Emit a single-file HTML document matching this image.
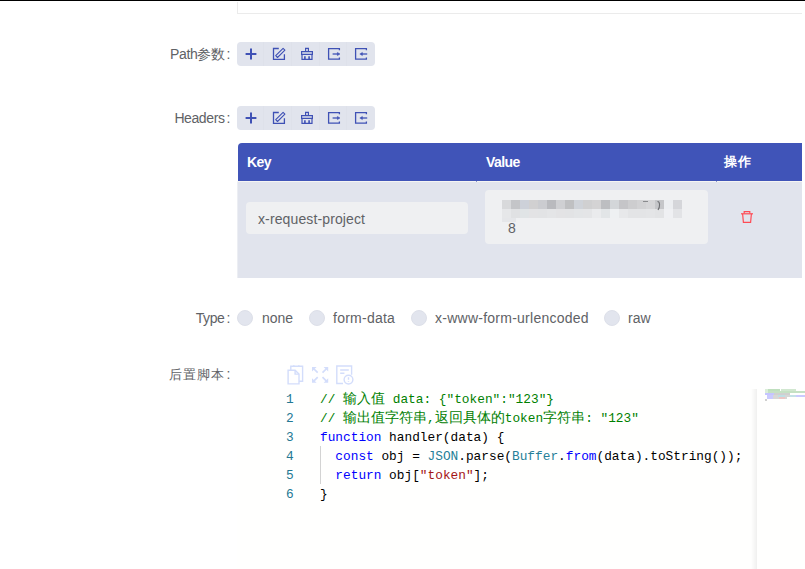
<!DOCTYPE html>
<html><head><meta charset="utf-8">
<style>
*{margin:0;padding:0;box-sizing:border-box}
html,body{width:805px;height:569px;overflow:hidden;background:#fff}
body{position:relative;font-family:"Liberation Sans",sans-serif;color:#606266}
.a{position:absolute}
.lbl{position:absolute;font-size:14px;line-height:16px;color:#606266;white-space:nowrap;text-align:right;right:575px;letter-spacing:-0.4px}
.lbl i{font-style:normal;margin-left:2px}
.tb{position:absolute;left:237px;width:138px;height:24px;background:#e1e4ed;border-radius:4px}
.tb .d{position:absolute;top:0;width:1px;height:24px;background:#dee1ea}
.tb svg{position:absolute;top:0;left:0}
.th{position:absolute;top:143px;height:38px;font-size:14px;font-weight:bold;color:#fff;line-height:38px;letter-spacing:-0.6px}
.mos{display:grid;grid-template-columns:repeat(20,9px);grid-template-rows:9px 9px}.mos i{display:block}
.inp{position:absolute;background:#eff0f2;border-radius:4px}
.radio{position:absolute;top:310px;width:16px;height:16px;border-radius:50%;background:#e2e5ee;border:1px solid #dde0e9}
.rl{position:absolute;top:310px;font-size:14px;line-height:16px;color:#606266;white-space:nowrap}
.code{position:absolute;font-family:"Liberation Mono",monospace;font-size:12.8px;line-height:19px;white-space:pre;color:#000}
.ln{position:absolute;font-family:"Liberation Mono",monospace;font-size:12.8px;line-height:19px;color:#237893;left:286px}
.c{color:#008000}.z{font-size:14px}.k{color:#0000ff}.t{color:#267f99}.s{color:#a31515}.f{color:#001080}
</style></head>
<body>
<!-- top black line -->
<div class="a" style="left:0;top:0;width:805px;height:1px;background:#000"></div>
<!-- box remnant -->
<div class="a" style="left:237px;top:2px;width:565px;height:12px;border-left:1px solid #ebebeb;border-bottom:1px solid #ebebeb"></div>

<!-- Path label -->
<div class="lbl" style="top:46px">Path参数<i>:</i></div>
<div class="tb" style="top:42px">
  <div class="d" style="left:26px"></div><div class="d" style="left:54px"></div><div class="d" style="left:82px"></div><div class="d" style="left:109px"></div>
  <svg width="138" height="24" viewBox="0 0 138 24" fill="none" stroke="#3f51b5">
    <path d="M14 6.6v10.8M8.6 12h10.8" stroke-width="2"/>
    <path d="M41.8 6.5H36.5v10.8h10.9v-5" stroke-width="1.3"/>
    <path d="M38.7 13.7L46.1 6.3l1.8 1.8-7.4 7.4z" stroke-width="1.1" stroke-linejoin="round"/>
    <path d="M68.6 9.5V6.4h2.8v3.1 M64.6 9.6h10.8v2.8h-10.8z M65 12.4v5h10v-5" stroke-width="1.2"/>
    <path d="M67.9 14.2v3.2M72.1 14.2v3.2" stroke-width="1.6"/>
    <path d="M102.4 8.2V6.6H91.6v10.6h10.8v-1.6" stroke-width="1.3"/>
    <path d="M95.6 12h5.4" stroke-width="1.3"/><path d="M100.4 10.4l2.6 1.6-2.6 1.6z" fill="#3f51b5" stroke-width="0.5"/>
    <path d="M129.4 8.2V6.6h-10.8v10.6h10.8v-1.6" stroke-width="1.3"/>
    <path d="M124.6 12h5.6" stroke-width="1.3"/><path d="M125.4 10.4l-2.6 1.6 2.6 1.6z" fill="#3f51b5" stroke-width="0.5"/>
  </svg>
</div>

<!-- Headers label -->
<div class="lbl" style="top:110px">Headers<i>:</i></div>
<div class="tb" style="top:106px">
  <div class="d" style="left:26px"></div><div class="d" style="left:54px"></div><div class="d" style="left:82px"></div><div class="d" style="left:109px"></div>
  <svg width="138" height="24" viewBox="0 0 138 24" fill="none" stroke="#3f51b5">
    <path d="M14 6.6v10.8M8.6 12h10.8" stroke-width="2"/>
    <path d="M41.8 6.5H36.5v10.8h10.9v-5" stroke-width="1.3"/>
    <path d="M38.7 13.7L46.1 6.3l1.8 1.8-7.4 7.4z" stroke-width="1.1" stroke-linejoin="round"/>
    <path d="M68.6 9.5V6.4h2.8v3.1 M64.6 9.6h10.8v2.8h-10.8z M65 12.4v5h10v-5" stroke-width="1.2"/>
    <path d="M67.9 14.2v3.2M72.1 14.2v3.2" stroke-width="1.6"/>
    <path d="M102.4 8.2V6.6H91.6v10.6h10.8v-1.6" stroke-width="1.3"/>
    <path d="M95.6 12h5.4" stroke-width="1.3"/><path d="M100.4 10.4l2.6 1.6-2.6 1.6z" fill="#3f51b5" stroke-width="0.5"/>
    <path d="M129.4 8.2V6.6h-10.8v10.6h10.8v-1.6" stroke-width="1.3"/>
    <path d="M124.6 12h5.6" stroke-width="1.3"/><path d="M125.4 10.4l-2.6 1.6 2.6 1.6z" fill="#3f51b5" stroke-width="0.5"/>
  </svg>
</div>

<!-- table -->
<div class="a" style="left:238px;top:143px;width:564px;height:38px;background:#4054b8;border-radius:4px 0 0 0"></div>
<div class="a" style="left:237px;top:181px;width:565px;height:1px;background:#f5f5f3"></div><div class="a" style="left:476px;top:181px;width:1px;height:1px;background:#8c95c9"></div><div class="a" style="left:716px;top:181px;width:1px;height:1px;background:#8c95c9"></div>
<div class="a" style="left:237px;top:182px;width:565px;height:96px;background:#e1e4ed;border-left:1px solid #eceef3"></div>
<div class="th" style="left:247px">Key</div>
<div class="th" style="left:486px">Value</div>
<div class="th" style="left:724px;top:143px;font-size:13px;letter-spacing:1px">操作</div>

<div class="inp" style="left:246px;top:202px;width:222px;height:32px"></div>
<div class="a" style="left:258px;top:211px;font-size:14px;line-height:16px;color:#606266;letter-spacing:0.12px">x-request-project</div>

<div class="inp" style="left:485px;top:190px;width:223px;height:54px"></div>
<div class="a mos" style="left:502px;top:200px"><i style="background:#d8d9db"></i><i style="background:#c4c5c8"></i><i style="background:#cdd1d9"></i><i style="background:#d1d0d1"></i><i style="background:#cbccd0"></i><i style="background:#b9babe"></i><i style="background:#cfd0d3"></i><i style="background:#bfc0c2"></i><i style="background:#cfd3d9"></i><i style="background:#d0d0d1"></i><i style="background:#d4d3d4"></i><i style="background:#bdbec1"></i><i style="background:#d3d6d9"></i><i style="background:#c5c5c8"></i><i style="background:#cdcdcf"></i><i style="background:#d2d2d4"></i><i style="background:#d6d6d8"></i><i style="background:#c5c6c9"></i><i style="background:#eceef1"></i><i style="background:#d5d6da"></i><i style="background:#e6e7e9"></i><i style="background:#e0e1e3"></i><i style="background:#e0e4e6"></i><i style="background:#e3e3e5"></i><i style="background:#e2e3e5"></i><i style="background:#e4e5e7"></i><i style="background:#e3e3e5"></i><i style="background:#e2e3e5"></i><i style="background:#e3e5e7"></i><i style="background:#e4e5e7"></i><i style="background:#eaebed"></i><i style="background:#e2e5e7"></i><i style="background:#eef0f2"></i><i style="background:#e7e8ea"></i><i style="background:#e3e4e6"></i><i style="background:#e3e4e6"></i><i style="background:#e4e5e7"></i><i style="background:#e2e3e5"></i><i style="background:#eff0f3"></i><i style="background:#e2e3e6"></i></div>
<div class="a" style="left:502px;top:218px;width:14px;height:4px;background:#e5e6e9;border-radius:0 0 0 0"></div>
<div class="a" style="left:643px;top:201px;width:5px;height:1.3px;background:#8a8b8e"></div>
<svg class="a" style="left:650px;top:199px" width="16" height="14" viewBox="0 0 16 14" fill="none" stroke="#6d6e72" stroke-width="1.1"><path d="M7.5 2.5c2.5 0 2.8 5 0.5 8.5"/></svg>
<div class="a" style="left:508px;top:220px;font-size:14px;line-height:16px;color:#606266">8</div>

<svg class="a" style="left:737px;top:205px" width="20" height="23" viewBox="0 0 20 23" fill="none" stroke="#fe4b55" stroke-width="1.2">
  <path d="M7.2 8.6V6.6h5.6v2"/>
  <path d="M4 8.8h12"/>
  <path d="M5.6 8.8l0.8 8.6h7.2l0.8-8.6"/>
</svg>

<!-- Type -->
<div class="lbl" style="top:310px">Type<i>:</i></div>
<div class="radio" style="left:237px"></div><div class="rl" style="left:262px">none</div>
<div class="radio" style="left:309px"></div><div class="rl" style="left:333px;letter-spacing:0.25px">form-data</div>
<div class="radio" style="left:411px"></div><div class="rl" style="left:435px;letter-spacing:0.25px">x-www-form-urlencoded</div>
<div class="radio" style="left:604px"></div><div class="rl" style="left:628px">raw</div>

<!-- script -->
<div class="lbl" style="top:366px"><span style="font-size:13px;letter-spacing:0.9px">后置脚本</span><i>:</i></div>
<svg class="a" style="left:284px;top:362px" width="72" height="26" viewBox="0 0 72 26" fill="none" stroke="#d3ddfb" stroke-width="1.4">
  <path d="M6.8 8.2V4.2h11.8v15h-3.6"/>
  <path d="M9.8 3.2v1.6M14.8 3.2v1.6"/>
  <path d="M4.1 8.2h7l3.9 3.9v9.8H4.1z"/>
  <path d="M11.1 8.2v3.9h3.9"/>
  <path d="M29.5 6.5l4.2 4.2M42.7 6.5l-4.2 4.2M29.5 19.3l4.2-4.2M42.7 19.3l-4.2-4.2" stroke-width="1.7"/><path d="M28 5h4.6L28 9.6z M44.2 5h-4.6l4.6 4.6z M28 20.8h4.6L28 16.2z M44.2 20.8h-4.6l4.6-4.6z" fill="#d3ddfb" stroke="none"/>
  
  <path d="M59 21.5h-6.2V4h14.8v8.8"/>
  <path d="M56.2 8h8.6M56.2 11.2h4.2" stroke-width="1.5"/>
  <circle cx="64.5" cy="17.6" r="4.4"/>
  <path d="M64.5 15.2v2.6M64.5 19.2v0.9"/>
</svg>

<div class="a" style="left:237px;top:389px;width:568px;height:180px;background:#fffffe"></div>
<div class="a" style="left:751px;top:389px;width:6px;height:180px;background:linear-gradient(to right,rgba(0,0,0,0),rgba(0,0,0,0.06))"></div>
<div class="a" style="left:320px;top:446px;width:1px;height:38px;background:#d3d3d3"></div>
<div class="a" style="left:765px;top:389px;width:3px;height:2px;background:#a6d4a6;opacity:.4"></div><div class="a" style="left:768px;top:389px;width:12px;height:2px;background:#5fae5f;opacity:.4"></div><div class="a" style="left:781px;top:389px;width:15px;height:2px;background:#8cc48c;opacity:.4"></div><div class="a" style="left:765px;top:391px;width:3px;height:2px;background:#a6d4a6;opacity:.4"></div><div class="a" style="left:768px;top:391px;width:37px;height:2px;background:#6db56d;opacity:.4"></div><div class="a" style="left:765px;top:393px;width:9px;height:2px;background:#6f6fff;opacity:.4"></div><div class="a" style="left:774px;top:393px;width:16px;height:2px;background:#8a8a8a;opacity:.4"></div><div class="a" style="left:767px;top:395px;width:6px;height:2px;background:#7b7bff;opacity:.4"></div><div class="a" style="left:773px;top:395px;width:5px;height:2px;background:#9a9a9a;opacity:.4"></div><div class="a" style="left:778px;top:395px;width:7px;height:2px;background:#5fb0bf;opacity:.4"></div><div class="a" style="left:785px;top:395px;width:5px;height:2px;background:#9a9a9a;opacity:.4"></div><div class="a" style="left:790px;top:395px;width:6px;height:2px;background:#6fb5c5;opacity:.4"></div><div class="a" style="left:796px;top:395px;width:9px;height:2px;background:#7b7bff;opacity:.4"></div><div class="a" style="left:767px;top:397px;width:6px;height:2px;background:#7b7bff;opacity:.4"></div><div class="a" style="left:773px;top:397px;width:6px;height:2px;background:#9a9a9a;opacity:.4"></div><div class="a" style="left:779px;top:397px;width:6px;height:2px;background:#d07070;opacity:.4"></div><div class="a" style="left:785px;top:397px;width:2px;height:2px;background:#9a9a9a;opacity:.4"></div><div class="a" style="left:765px;top:399px;width:2px;height:2px;background:#8a8a8a;opacity:.4"></div>

<div class="ln" style="top:390px">1</div>
<div class="ln" style="top:409px">2</div>
<div class="ln" style="top:428px">3</div>
<div class="ln" style="top:447px">4</div>
<div class="ln" style="top:466px">5</div>
<div class="ln" style="top:485px">6</div>

<div class="code" style="left:320px;top:390px"><span class="c">// <span class="z">输入值</span> data: {"token":"123"}</span></div>
<div class="code" style="left:320px;top:409px"><span class="c">// <span class="z">输出值字符串</span>,<span class="z">返回具体的</span>token<span class="z">字符串</span>: "123"</span></div>
<div class="code" style="left:320px;top:428px"><span class="k">function</span> handler(data) {</div>
<div class="code" style="left:320px;top:447px">  <span class="k">const</span> obj = <span class="t">JSON</span>.parse(<span class="t">Buffer</span>.<span class="k">from</span>(data).toString());</div>
<div class="code" style="left:320px;top:466px">  <span class="k">return</span> obj[<span class="s">"token"</span>];</div>
<div class="code" style="left:320px;top:485px">}</div>

</body></html>
